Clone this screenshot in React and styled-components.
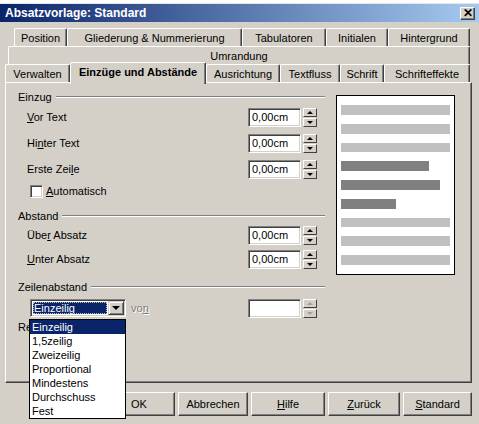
import React from 'react'
import styled, { createGlobalStyle } from 'styled-components'

const GlobalStyle = createGlobalStyle`
  html, body {
    margin: 0;
    padding: 0;
    background: #fff;
  }
  body {
    font-family: "Liberation Sans", Arial, sans-serif;
    font-size: 11px;
    color: #000;
  }
`

const Dialog = styled.div`
  width: 479px;
  height: 420px;
  margin-top: 3px;
  background: #d4d0c8;
  border-top: 1px solid #e8e6e0;
  display: flex;
  flex-direction: column;
`

const TitleBar = styled.div`
  height: 18px;
  display: flex;
  align-items: center;
  justify-content: space-between;
  padding: 0 4px 0 5px;
  background: linear-gradient(to right, #0a246a, #a6caf0);
  color: #fff;
  font-weight: bold;
  font-size: 12px;
`

const CloseBtn = styled.div`
  width: 15px;
  height: 13px;
  background: #d4d0c8;
  box-sizing: border-box;
  border: 1px solid;
  border-color: #fff #404040 #404040 #fff;
  box-shadow: inset -1px -1px #808080;
  color: #000;
  display: flex;
  align-items: center;
  justify-content: center;
  font-size: 12px;
  font-weight: bold;
  line-height: 1;
`

const Body = styled.div`
  flex: 1;
  display: flex;
  flex-direction: column;
  padding: 6px 7px 0 5px;
`

const TabRow = styled.div`
  display: flex;
  height: 18px;
  padding-left: ${p => p.$indent}px;
`

const Tab = styled.div`
  width: ${p => p.$w}px;
  box-sizing: border-box;
  height: ${p => (p.$active ? 22 : 18)}px;
  margin-top: ${p => (p.$active ? -2 : 0)}px;
  position: relative;
  z-index: ${p => (p.$active ? 2 : 1)};
  background: #d4d0c8;
  border-top: 1px solid #fff;
  border-left: 1px solid #fff;
  border-right: 1px solid #404040;
  border-radius: 2px 2px 0 0;
  box-shadow: inset -1px 0 #808080;
  display: flex;
  align-items: center;
  justify-content: center;
  padding-bottom: ${p => (p.$active ? 3 : 0)}px;
  font-weight: ${p => (p.$active ? 'bold' : 'normal')};
  white-space: nowrap;
`

const Panel = styled.div`
  height: 301px;
  box-sizing: border-box;
  border: 1px solid;
  border-color: #fff #404040 #404040 #fff;
  box-shadow: inset -1px -1px #808080;
  display: flex;
  padding: 7px 0 0 12px;
`

const LeftCol = styled.div`
  width: 307px;
  display: flex;
  flex-direction: column;
`

const GroupHead = styled.div`
  height: 14px;
  display: flex;
  align-items: center;
  gap: 4px;
  margin-top: ${p => p.$mt || 0}px;
  white-space: nowrap;

  &::after {
    content: "";
    flex: 1;
    border-top: 1px solid #808080;
    border-bottom: 1px solid #fff;
    display: ${p => (p.$noLine ? 'none' : 'block')};
  }
`

const FieldRow = styled.div`
  height: ${p => p.$h}px;
  display: flex;
  align-items: center;
  padding: 0 8px 0 9px;
`

const Label = styled.span`
  flex: 1;
`

const Spin = styled.div`
  display: flex;
  gap: 2px;
  height: 19px;
`

const Edit = styled.div`
  width: 53px;
  box-sizing: border-box;
  background: #fff;
  border: 1px solid;
  border-color: #808080 #fff #fff #808080;
  box-shadow: inset 1px 1px #404040, inset -1px -1px #d4d0c8;
  padding-left: 3px;
  display: flex;
  align-items: center;
`

const SpinButtons = styled.div`
  width: 14px;
  display: flex;
  flex-direction: column;
  gap: 1px;
`

const SpinBtn = styled.div`
  flex: 1;
  box-sizing: border-box;
  background: #d4d0c8;
  border: 1px solid;
  border-color: #fff #404040 #404040 #fff;
  display: flex;
  align-items: center;
  justify-content: center;

  &::after {
    content: "";
    width: 0;
    height: 0;
    border-left: 3px solid transparent;
    border-right: 3px solid transparent;
    ${p => (p.$down ? 'border-top' : 'border-bottom')}: 3px solid ${p => (p.$disabled ? '#a0a0a0' : '#000')};
  }
`

const CheckRow = styled.div`
  height: 18px;
  display: flex;
  align-items: center;
  gap: 3px;
  padding-left: 12px;
`

const CheckBox = styled.div`
  width: 13px;
  height: 13px;
  box-sizing: border-box;
  background: #fff;
  border: 1px solid;
  border-color: #808080 #fff #fff #808080;
  box-shadow: inset 1px 1px #404040, inset -1px -1px #d4d0c8;
`

const ComboRow = styled.div`
  height: 20px;
  margin-top: 4px;
  display: flex;
  align-items: center;
  padding: 0 8px 0 12px;
`

const Combo = styled.div`
  position: relative;
  width: 96px;
  height: 18px;
  box-sizing: border-box;
  background: #fff;
  border: 1px solid;
  border-color: #808080 #fff #fff #808080;
  box-shadow: inset 1px 1px #404040, inset -1px -1px #d4d0c8;
  display: flex;
  padding: 2px;
  gap: 1px;
`

const ComboValue = styled.div`
  flex: 1;
  background: #0a246a;
  color: #fff;
  outline: 1px dotted #c0c0c0;
  outline-offset: -1px;
  display: flex;
  align-items: center;
  padding-left: 1px;
`

const ComboArrow = styled.div`
  width: 16px;
  margin: -1px -1px -1px 0;
  box-sizing: border-box;
  background: #d4d0c8;
  border: 1px solid;
  border-color: #d4d0c8 #404040 #404040 #d4d0c8;
  box-shadow: inset 1px 1px #fff, inset -1px -1px #808080;
  display: flex;
  align-items: center;
  justify-content: center;

  &::after {
    content: "";
    border-left: 4px solid transparent;
    border-right: 4px solid transparent;
    border-top: 4px solid #000;
  }
`

const DropList = styled.ul`
  position: absolute;
  top: 19px;
  left: -2px;
  width: 97px;
  box-sizing: border-box;
  margin: 0;
  padding: 0;
  list-style: none;
  background: #fff;
  border: 1px solid #000;
  z-index: 10;
`

const DropItem = styled.li`
  height: 14px;
  line-height: 14px;
  padding-left: 2px;
  background: ${p => (p.$sel ? '#0a246a' : '#fff')};
  color: ${p => (p.$sel ? '#fff' : '#000')};
`

const VonLabel = styled.span`
  margin-left: 5px;
  flex: 1;
  color: #808080;
  text-shadow: 1px 1px #fff;
`

const Preview = styled.div`
  width: 119px;
  height: 180px;
  margin: 5px 0 0 11px;
  box-sizing: border-box;
  background: #fff;
  border: 1px solid #000;
  padding: 9px 4px;
  display: flex;
  flex-direction: column;
  gap: 9px;
`

const Bar = styled.div`
  height: 10px;
  width: ${p => p.$w}px;
  background: ${p => (p.$dark ? '#808080' : '#c0c0c0')};
`

const ButtonRow = styled.div`
  display: flex;
  justify-content: flex-end;
  gap: 3px;
  margin-top: 9px;
`

const Button = styled.div`
  width: ${p => p.$w}px;
  height: 24px;
  box-sizing: border-box;
  background: #d4d0c8;
  border: 1px solid;
  border-color: #fff #404040 #404040 #fff;
  box-shadow: inset -1px -1px #808080;
  display: flex;
  align-items: center;
  justify-content: center;
`

function SpinField({ value, disabled }) {
  return (
    <Spin>
      <Edit>{value}</Edit>
      <SpinButtons>
        <SpinBtn $disabled={disabled} />
        <SpinBtn $down $disabled={disabled} />
      </SpinButtons>
    </Spin>
  )
}

const bars = [
  { w: 109 }, { w: 109 }, { w: 109 },
  { w: 88, dark: true }, { w: 99, dark: true }, { w: 55, dark: true },
  { w: 109 }, { w: 109 }, { w: 109 },
]

const options = ['Einzeilig', '1,5zeilig', 'Zweizeilig', 'Proportional', 'Mindestens', 'Durchschuss', 'Fest']

export default function App() {
  return (
    <>
      <GlobalStyle />
      <Dialog>
        <TitleBar>
          <span>Absatzvorlage: Standard</span>
          <CloseBtn>✕</CloseBtn>
        </TitleBar>
        <Body>
          <TabRow $indent={9}>
            <Tab $w={53}>Position</Tab>
            <Tab $w={175}>Gliederung &amp; Nummerierung</Tab>
            <Tab $w={84}>Tabulatoren</Tab>
            <Tab $w={62}>Initialen</Tab>
            <Tab $w={82}>Hintergrund</Tab>
          </TabRow>
          <TabRow $indent={3}>
            <Tab $w={462}>Umrandung</Tab>
          </TabRow>
          <TabRow $indent={0}>
            <Tab $w={65}>Verwalten</Tab>
            <Tab $w={136} $active>Einzüge und Abstände</Tab>
            <Tab $w={74}>Ausrichtung</Tab>
            <Tab $w={60}>Textfluss</Tab>
            <Tab $w={44}>Schrift</Tab>
            <Tab $w={86}>Schrifteffekte</Tab>
          </TabRow>
          <Panel>
            <LeftCol>
              <GroupHead>Einzug</GroupHead>
              <FieldRow $h={26}>
                <Label><u>V</u>or Text</Label>
                <SpinField value="0,00cm" />
              </FieldRow>
              <FieldRow $h={26}>
                <Label>Hi<u>n</u>ter Text</Label>
                <SpinField value="0,00cm" />
              </FieldRow>
              <FieldRow $h={26}>
                <Label>Erste Zei<u>l</u>e</Label>
                <SpinField value="0,00cm" />
              </FieldRow>
              <CheckRow>
                <CheckBox />
                <span><u>A</u>utomatisch</span>
              </CheckRow>

              <GroupHead $mt={9}>Abstand</GroupHead>
              <FieldRow $h={24}>
                <Label>Übe<u>r</u> Absatz</Label>
                <SpinField value="0,00cm" />
              </FieldRow>
              <FieldRow $h={24}>
                <Label><u>U</u>nter Absatz</Label>
                <SpinField value="0,00cm" />
              </FieldRow>

              <GroupHead $mt={9}>Zeilenabstand</GroupHead>
              <ComboRow>
                <Combo>
                  <ComboValue>Einzeilig</ComboValue>
                  <ComboArrow />
                  <DropList>
                    {options.map((o, i) => (
                      <DropItem key={o} $sel={i === 0}>{o}</DropItem>
                    ))}
                  </DropList>
                </Combo>
                <VonLabel>vo<u>n</u></VonLabel>
                <SpinField value="" disabled />
              </ComboRow>

              <GroupHead $mt={2} $noLine>Registerhaltigkeit</GroupHead>
            </LeftCol>
            <Preview>
              {bars.map((b, i) => (
                <Bar key={i} $w={b.w} $dark={b.dark} />
              ))}
            </Preview>
          </Panel>
          <ButtonRow>
            <Button $w={72}>OK</Button>
            <Button $w={70}>Abbrechen</Button>
            <Button $w={74}><span><u>H</u>ilfe</span></Button>
            <Button $w={72}><span><u>Z</u>urück</span></Button>
            <Button $w={69}><span><u>S</u>tandard</span></Button>
          </ButtonRow>
        </Body>
      </Dialog>
    </>
  )
}
